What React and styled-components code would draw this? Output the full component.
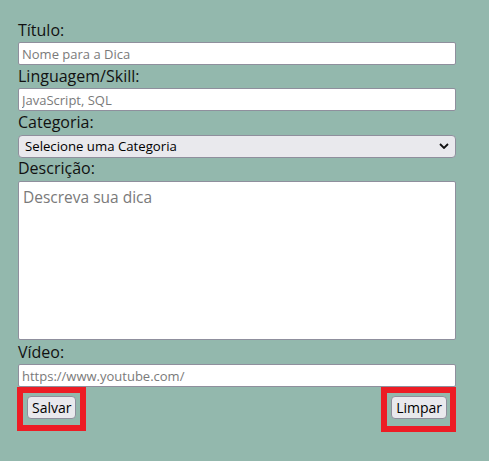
import React from 'react';
import styled, { createGlobalStyle } from 'styled-components';

const GlobalStyle = createGlobalStyle`
  html, body {
    margin: 0;
    padding: 0;
    background: #93b8ad;
    min-height: 100%;
  }
  body {
    font-family: "Open Sans", "Noto Sans", sans-serif;
  }
`;

const Form = styled.form`
  display: flex;
  flex-direction: column;
  width: 438px;
  padding: 19px 0 0 18px;
`;

const Label = styled.label`
  display: block;
  font-size: 16px;
  line-height: 23px;
  color: #111;
`;

const Input = styled.input`
  box-sizing: border-box;
  width: 100%;
  height: 23px;
  margin: 0;
  padding: 0 3px;
  border: 1px solid #8f8f9d;
  border-radius: 2px;
  background: #fff;
  font-family: "Open Sans", sans-serif;
  font-size: 13px;
  color: #000;
  outline: none;

  &::placeholder {
    color: #7a7a7a;
  }
`;

const SelectWrap = styled.div`
  position: relative;
  height: 23px;
`;

const Select = styled.select`
  box-sizing: border-box;
  width: 100%;
  height: 23px;
  margin: 0;
  padding: 0 20px 0 6px;
  border: 1px solid #8f8f9d;
  border-radius: 4px;
  background: #e9e9ed;
  appearance: none;
  -webkit-appearance: none;
  font-family: "Open Sans", sans-serif;
  font-size: 13.2px;
  color: #000;
  outline: none;
`;

const Chevron = styled.svg`
  position: absolute;
  right: 7px;
  top: 9px;
  pointer-events: none;
`;

const TextArea = styled.textarea`
  box-sizing: border-box;
  display: block;
  width: 100%;
  height: 159px;
  margin: 1px 0 1px;
  padding: 4px 4px;
  border: 1px solid #8f8f9d;
  border-radius: 2px;
  background: #fff;
  resize: none;
  font-family: "Open Sans", sans-serif;
  font-size: 15.5px;
  color: #000;
  outline: none;

  &::placeholder {
    color: #7a7a7a;
  }
`;

const Actions = styled.div`
  display: flex;
  justify-content: space-between;
  align-items: flex-start;
  margin-left: -1px;
`;

const Highlight = styled.div`
  border: 6px solid #ed1c24;
  padding: 3px ${(p) => p.$right}px ${(p) => p.$bottom}px ${(p) => p.$left}px;
`;

const Button = styled.button`
  box-sizing: border-box;
  height: 23px;
  margin: 0;
  padding: 0 4px;
  border: 1px solid #8f8f9d;
  border-radius: 4px;
  background: #e9e9ed;
  font-family: "Open Sans", sans-serif;
  font-size: 14px;
  color: #000;
  cursor: pointer;
`;

export default function App() {
  return (
    <>
      <GlobalStyle />
      <Form onSubmit={(e) => e.preventDefault()}>
        <Label htmlFor="titulo">Título:</Label>
        <Input id="titulo" placeholder="Nome para a Dica" />

        <Label htmlFor="skill">Linguagem/Skill:</Label>
        <Input id="skill" placeholder="JavaScript, SQL" />

        <Label htmlFor="categoria">Categoria:</Label>
        <SelectWrap>
          <Select id="categoria" defaultValue="">
            <option value="">Selecione uma Categoria</option>
            <option value="frontend">FrontEnd</option>
            <option value="backend">BackEnd</option>
            <option value="fullstack">FullStack</option>
            <option value="softskill">Comportamental/Soft</option>
          </Select>
          <Chevron width="10" height="6" viewBox="0 0 10 6">
            <path d="M1 1 L5 5 L9 1" fill="none" stroke="#111" strokeWidth="1.8" />
          </Chevron>
        </SelectWrap>

        <Label htmlFor="descricao">Descrição:</Label>
        <TextArea id="descricao" placeholder="Descreva sua dica" />

        <Label htmlFor="video">Vídeo:</Label>
        <Input id="video" placeholder="https://www.youtube.com/" />

        <Actions>
          <Highlight $left={4} $right={4} $bottom={6}>
            <Button type="submit">Salvar</Button>
          </Highlight>
          <Highlight $left={4} $right={3} $bottom={7}>
            <Button type="reset">Limpar</Button>
          </Highlight>
        </Actions>
      </Form>
    </>
  );
}
